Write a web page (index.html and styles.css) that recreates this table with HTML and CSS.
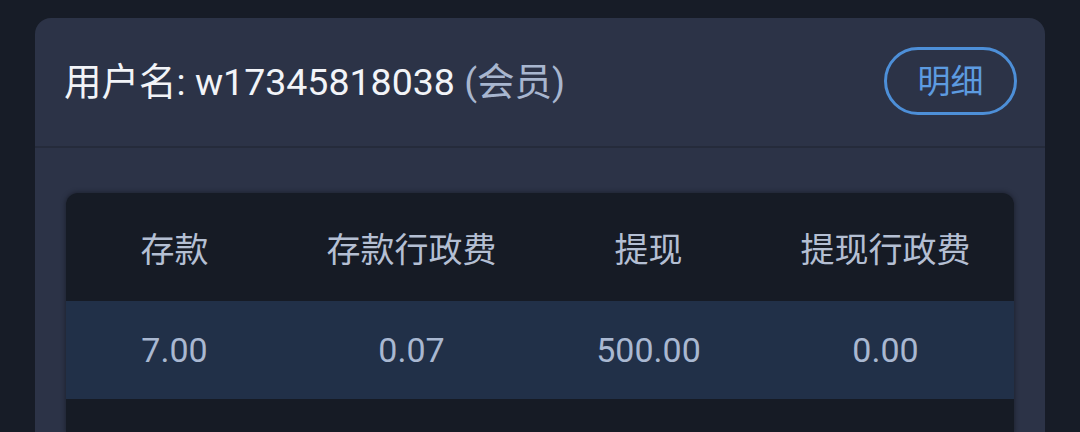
FILE: index.html
```html
<!DOCTYPE html>
<html lang="zh-CN">
<head>
<meta charset="utf-8">
<link rel="stylesheet" href="styles.css">
</head>
<body>
<div class="card">
  <div class="card-head">
    <div class="user"><span class="label">用户名: w17345818038</span> <span class="role">(会员)</span></div>
    <button class="detail">明细</button>
  </div>
  <div class="card-body">
    <div class="table">
      <div class="row head">
        <div class="cell">存款</div>
        <div class="cell">存款行政费</div>
        <div class="cell">提现</div>
        <div class="cell">提现行政费</div>
      </div>
      <div class="row data">
        <div class="cell">7.00</div>
        <div class="cell">0.07</div>
        <div class="cell">500.00</div>
        <div class="cell">0.00</div>
      </div>
      <div class="row tail"></div>
    </div>
  </div>
</div>
</body>
</html>
```
FILE: styles.css
```css
html, body {
  margin: 0;
  padding: 0;
  background: #171c27;
  height: 432px;
  overflow: hidden;
  font-family: Roboto, "Noto Sans CJK SC", sans-serif;
}
body {
  padding: 18px 35px 0;
  box-sizing: border-box;
}
.card {
  background: #2c3347;
  border-radius: 16px 16px 0 0;
  height: 414px;
}
.card-head {
  height: 128px;
  display: flex;
  align-items: center;
  justify-content: space-between;
  padding: 0 28px 0 29px;
  border-bottom: 2px solid #252b3b;
}
.user {
  font-size: 37.5px;
  color: #f2f4f8;
  padding-bottom: 8px;
}
.role {
  color: #a8b6cf;
}
.detail {
  width: 133px;
  height: 68px;
  border: 3px solid #4d8fd8;
  border-radius: 34px;
  background: transparent;
  color: #5d9be0;
  font-family: Roboto, "Noto Sans CJK SC", sans-serif;
  font-size: 33px;
  padding: 0 0 3px;
  margin-bottom: 3px;
}
.card-body {
  padding: 45px 31px 0;
}
.table {
  background: #161b25;
  border-radius: 12px 12px 0 0;
  overflow: hidden;
  box-shadow: 0 0 4px 1px rgba(20, 24, 34, 0.6);
}
.row {
  display: grid;
  grid-template-columns: repeat(4, 237px);
  margin-left: -10px;
  align-items: center;
  text-align: center;
  font-size: 34px;
}
.head {
  height: 108px;
  color: #b4bfd3;
}
.data {
  height: 98px;
  background: #213048;
  color: #a9b8d1;
}
.tail {
  height: 33px;
}
```
